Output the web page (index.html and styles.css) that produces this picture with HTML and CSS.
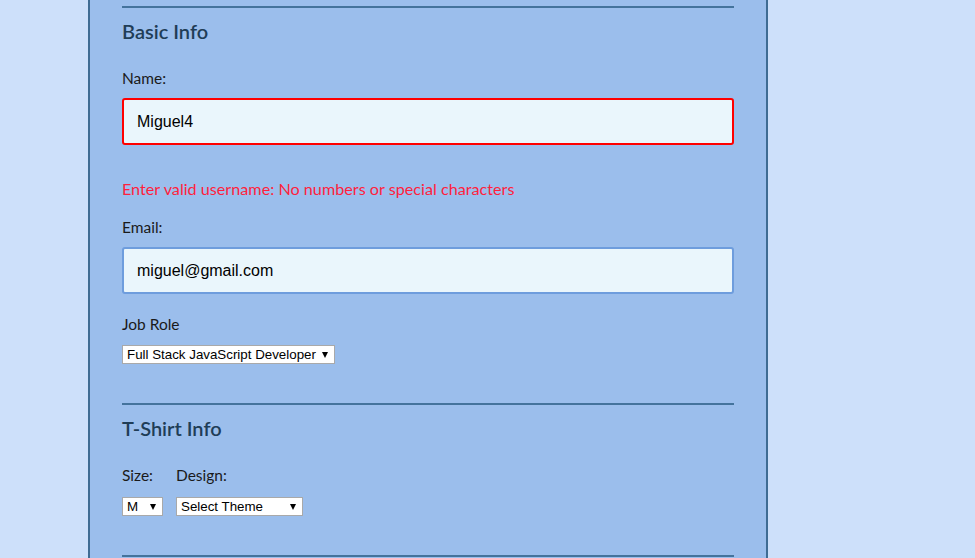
FILE: index.html
```html
<!DOCTYPE html>
<html>
<head>
<meta charset="utf-8">
<link rel="stylesheet" href="styles.css">
</head>
<body>
<div class="container">
  <form class="form">
    <fieldset class="section">
      <h2 class="section-title">Basic Info</h2>
      <label class="label label--name" for="name">Name:</label>
      <input class="text-input text-input--error" id="name" type="text" value="Miguel4">
      <p class="error">Enter valid username: No numbers or special characters</p>
      <label class="label label--email" for="mail">Email:</label>
      <input class="text-input" id="mail" type="email" value="miguel@gmail.com">
      <label class="label label--job" for="title">Job Role</label>
      <span class="select-wrap select-wrap--job">
        <select class="select" id="title"><option>Full Stack JavaScript Developer</option></select>
      </span>
    </fieldset>
    <fieldset class="section section--shirt">
      <h2 class="section-title">T-Shirt Info</h2>
      <div class="shirt-row">
        <div class="shirt-group">
          <label class="label label--shirt" for="size">Size:</label>
          <span class="select-wrap select-wrap--size">
            <select class="select" id="size"><option>M</option></select>
          </span>
        </div>
        <div class="shirt-group">
          <label class="label label--shirt" for="design">Design:</label>
          <span class="select-wrap select-wrap--design">
            <select class="select" id="design"><option>Select Theme</option></select>
          </span>
        </div>
      </div>
    </fieldset>
    <fieldset class="section section--next"></fieldset>
  </form>
</div>
</body>
</html>
```
FILE: styles.css
```css
html, body {
  margin: 0;
  padding: 0;
  background: #cde0fa;
  height: 100%;
  overflow: hidden;
}
.container {
  margin-left: 88px;
  width: 612px;
  padding: 6px 32px 0;
  background: #9bbeec;
  border-left: 2px solid #3f6c93;
  border-right: 2px solid #3f6c93;
  min-height: 600px;
  font-family: Lato, "Noto Sans", sans-serif;
  color: #111;
}
.form { margin: 0; }
.section {
  margin: 0;
  padding: 0;
  border: 0;
  border-top: 2px solid #44739c;
  min-width: 0;
}
.section-title {
  margin: 10px 0 0;
  font-size: 20px;
  line-height: 26px;
  font-weight: 600;
  color: #1f3d57;
}
.label {
  display: block;
  font-size: 15.5px;
  line-height: 20px;
  color: #1a1a1a;
}
.label--name { margin-top: 24px; }
.label--email { margin-top: 18px; }
.label--job { margin-top: 20px; }
.text-input {
  display: block;
  box-sizing: border-box;
  width: 612px;
  height: 47px;
  margin-top: 10px;
  padding: 0 13px;
  border: 2px solid #6e9ddd;
  border-radius: 3px;
  background: #eaf6fc;
  font-family: Arial, "Liberation Sans", sans-serif;
  font-size: 16px;
  color: #000;
  outline: none;
}
.text-input--error { border-color: #ff0000; }
.error {
  margin: 34px 0 0;
  font-size: 16.2px;
  line-height: 20px;
  color: #ff1f3d;
}
.select-wrap {
  position: relative;
  display: inline-block;
  vertical-align: top;
  margin-top: 11px;
}
.select-wrap::after {
  content: "";
  position: absolute;
  right: 7px;
  top: 7px;
  border-left: 3.5px solid transparent;
  border-right: 3.5px solid transparent;
  border-top: 6px solid #000;
  pointer-events: none;
}
.select {
  -webkit-appearance: none;
  appearance: none;
  display: block;
  box-sizing: border-box;
  height: 19px;
  margin: 0;
  padding: 0 0 0 4px;
  border: 1px solid #a9a9a9;
  border-radius: 0;
  background: #fff;
  font-family: Arial, "Liberation Sans", sans-serif;
  font-size: 13.33px;
  line-height: 17px;
  color: #000;
}
.select-wrap--job .select { width: 213px; }
.select-wrap--size .select { width: 41px; }
.select-wrap--design .select { width: 127px; }
.section--shirt { margin-top: 39px; }
.shirt-row {
  display: flex;
  gap: 13px;
}
.label--shirt { margin-top: 24px; }
.shirt-group .select-wrap { margin-top: 12px; }
.section--next { margin-top: 39px; height: 20px; }
```
